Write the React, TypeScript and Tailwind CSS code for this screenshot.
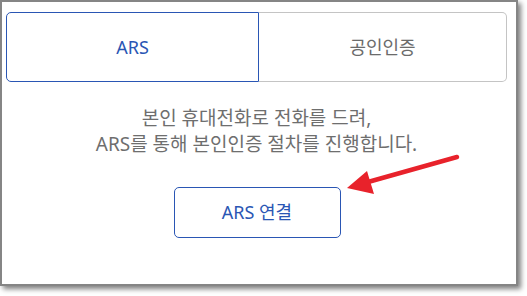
import React from "react";

const font = { fontFamily: '"Noto Sans", "Noto Sans CJK KR", sans-serif' };

const App = () => {
  return (
    <div className="relative h-[296px] w-[527px] overflow-hidden bg-white" style={font}>
      {/* Window panel with frame and drop shadow */}
      <div className="h-[286px] w-[518px] border-2 border-[#858585] bg-white shadow-[3px_3px_5px_rgba(0,0,0,0.5)]">
        <div className="flex flex-col pl-[4px] pr-[9px] pt-[10px]">
          {/* Tabs */}
          <div className="flex h-[70px]">
            <button className="flex w-[253px] items-center justify-center rounded-l-[5px] border border-[#2a56b4] text-[18px] text-[#2a56b4]">
              ARS
            </button>
            <button className="flex flex-1 items-center justify-center rounded-r-[5px] border border-l-0 border-[#c4c4c4] text-[18px] text-[#6b6b6b]">
              공인인증
            </button>
          </div>

          {/* Description */}
          <p className="mt-[23px] text-center text-[19px] leading-[26px] text-[#6e6e6e]">
            본인 휴대전화로 전화를 드려,
            <br />
            ARS를 통해 본인인증 절차를 진행합니다.
          </p>

          {/* Connect button */}
          <div className="mt-[30px] flex justify-center">
            <button className="ml-[1px] h-[51px] w-[167px] rounded-[5px] border border-[#2a56b4] text-[18px] text-[#2a56b4]">
              ARS 연결
            </button>
          </div>
        </div>
      </div>

      {/* Red annotation arrow */}
      <svg className="absolute left-0 top-0" width="527" height="296" viewBox="0 0 527 296">
        <line x1="368" y1="182" x2="457" y2="157" stroke="#e8222b" strokeWidth="4.5" strokeLinecap="round" />
        <polygon points="347,188 367,171 374,194" fill="#e8222b" />
      </svg>
    </div>
  );
};

export default App;
